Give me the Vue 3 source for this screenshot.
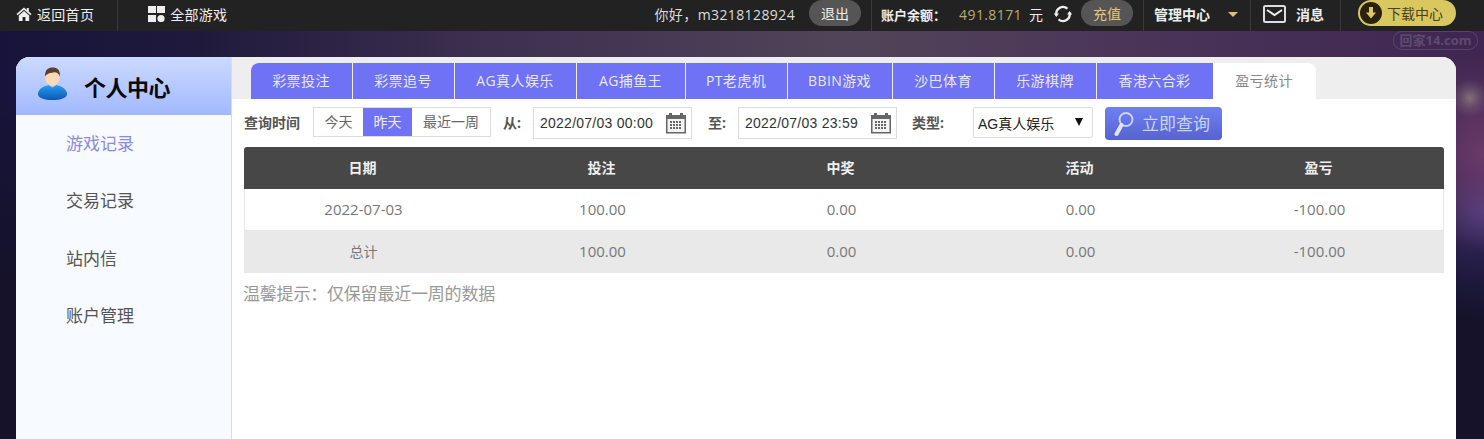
<template>
  <div class="page">
    <header class="topbar">
      <a class="top-link home">
        <svg width="16" height="14" viewBox="0 0 16 14"><path d="M8 0.5 L0.5 7 L1.6 8.2 L8 2.8 L14.4 8.2 L15.5 7 L12.8 4.6 V1 H10.8 V2.9 Z M8 4 L2.8 8.4 V14 H6.6 V10 H9.4 V14 H13.2 V8.4 Z" fill="#eee"/></svg>
        <span>返回首页</span>
      </a>
      <i class="sep first"></i>
      <a class="top-link games">
        <svg width="17" height="16" viewBox="0 0 17 16"><rect x="0" y="0" width="8" height="7" fill="#eee"/><rect x="9" y="0" width="8" height="7" fill="#eee"/><rect x="0" y="9" width="8" height="7" fill="#eee"/><circle cx="13" cy="12.5" r="3.6" fill="#eee"/></svg>
        <span>全部游戏</span>
      </a>
      <div class="top-right">
        <span class="hello">你好，m3218128924</span>
        <span class="pill logout">退出</span>
        <i class="sep"></i>
        <span class="balance-label">账户余额：</span>
        <span class="balance">491.8171</span>
        <span class="yuan">元</span>
        <svg class="refresh" width="20" height="20" viewBox="0 0 20 20" fill="none"><path d="M3.5 11.5 A6.8 6.8 0 0 1 14.5 4.6" stroke="#eee" stroke-width="2.2"/><path d="M16.5 8.5 A6.8 6.8 0 0 1 5.5 15.4" stroke="#eee" stroke-width="2.2"/><path d="M0.8 9.5 L6 9.5 L3.4 13 Z M19.2 10.5 L14 10.5 L16.6 7 Z" fill="#eee"/></svg>
        <span class="pill charge">充值</span>
        <i class="sep"></i>
        <span class="manage">管理中心</span>
        <i class="caret"></i>
        <i class="sep"></i>
        <svg class="mail" width="23" height="18" viewBox="0 0 23 18" fill="none"><rect x="1" y="1" width="21" height="16" rx="1.5" stroke="#ddd" stroke-width="2"/><path d="M4 5 L11.5 10 L19 5" stroke="#eee" stroke-width="2"/></svg>
        <span class="msg">消息</span>
        <i class="sep"></i>
        <span class="download">
          <svg width="22" height="22" viewBox="0 0 22 22"><circle cx="11" cy="11" r="11" fill="#2a2110"/><path d="M9 5 H13 V10.5 H16 L11 16.5 L6 10.5 H9 Z" fill="#e0c95c"/></svg>
          <span>下载中心</span>
        </span>
      </div>
    </header>

    <div class="watermark">回家14.com</div>

    <div class="card">
      <aside class="side">
        <div class="side-head">
          <svg class="avatar" width="31" height="33" viewBox="0 0 32 34">
            <defs>
              <linearGradient id="shirt" x1="0" y1="0" x2="0" y2="1"><stop offset="0" stop-color="#2a9cf0"/><stop offset="1" stop-color="#0a58b8"/></linearGradient>
            </defs>
            <path d="M1 28 C1 22 8 19.500 12 18.500 L16 21 L20 18.500 C24 19.500 31 22 31 28 C31 32 24 34 16 34 C8 34 1 32 1 28 Z" fill="url(#shirt)"/>
            <ellipse cx="16" cy="10.500" rx="7.500" ry="9" fill="#fbd9b8"/>
            <path d="M8.500 10 C7.500 3 12 0.500 16 0.500 C20.500 0.500 24.500 3 23.500 10 C22.500 6.500 20.500 5.500 18 5.500 C14.500 6.500 10.500 6 8.500 10 Z" fill="#5a4030"/>
          </svg>
          <h1>个人中心</h1>
        </div>
        <nav class="side-nav">
          <a v-for="(item, i) in sideItems" :key="item" :class="{ on: i === 0 }">{{ item }}</a>
        </nav>
      </aside>

      <main class="main">
        <div class="tabs">
          <a v-for="tab in tabs" :key="tab" class="tab" :class="{ active: tab === '盈亏统计' }">{{ tab }}</a>
        </div>

        <div class="content">
          <div class="filters">
            <span class="f-label">查询时间</span>
            <div class="range">
              <a v-for="r in ranges" :key="r" :class="{ on: r === '昨天' }">{{ r }}</a>
            </div>
            <span class="f-label from">从:</span>
            <div class="date">
              <span>2022/07/03 00:00</span>
              <svg width="22" height="22" viewBox="0 0 22 22"><path d="M1 3 H4 V1 H7 V3 H15 V1 H18 V3 H21 V21.500 H1 Z" fill="#666"/><rect x="2.500" y="7" width="17" height="13" fill="#f4f4f4"/><g fill="#666"><rect x="5" y="9" width="2" height="2"/><rect x="8" y="9" width="2" height="2"/><rect x="11" y="9" width="2" height="2"/><rect x="14" y="9" width="2" height="2"/><rect x="5" y="12" width="2" height="2"/><rect x="8" y="12" width="2" height="2"/><rect x="11" y="12" width="2" height="2"/><rect x="14" y="12" width="2" height="2"/><rect x="5" y="15" width="2" height="2"/><rect x="8" y="15" width="2" height="2"/><rect x="11" y="15" width="2" height="2"/><rect x="14" y="15" width="2" height="2"/></g></svg>
            </div>
            <span class="f-label to">至:</span>
            <div class="date">
              <span>2022/07/03 23:59</span>
              <svg width="22" height="22" viewBox="0 0 22 22"><path d="M1 3 H4 V1 H7 V3 H15 V1 H18 V3 H21 V21.500 H1 Z" fill="#666"/><rect x="2.500" y="7" width="17" height="13" fill="#f4f4f4"/><g fill="#666"><rect x="5" y="9" width="2" height="2"/><rect x="8" y="9" width="2" height="2"/><rect x="11" y="9" width="2" height="2"/><rect x="14" y="9" width="2" height="2"/><rect x="5" y="12" width="2" height="2"/><rect x="8" y="12" width="2" height="2"/><rect x="11" y="12" width="2" height="2"/><rect x="14" y="12" width="2" height="2"/><rect x="5" y="15" width="2" height="2"/><rect x="8" y="15" width="2" height="2"/><rect x="11" y="15" width="2" height="2"/><rect x="14" y="15" width="2" height="2"/></g></svg>
            </div>
            <span class="f-label type">类型:</span>
            <div class="select">
              <span>AG真人娱乐</span>
              <i></i>
            </div>
            <a class="query">
              <svg width="20" height="26" viewBox="0 0 20 26" fill="none"><circle cx="12" cy="8.500" r="6.500" stroke="#c9d3fb" stroke-width="2"/><path d="M7.500 14 L2.500 23" stroke="#dfe6ff" stroke-width="4" stroke-linecap="round"/></svg>
              <span class="query-text">立即查询</span>
            </a>
          </div>

          <div class="table">
            <div class="row head">
              <span v-for="c in columns" :key="c">{{ c }}</span>
            </div>
            <div class="row">
              <span v-for="(c, i) in dayRow" :key="i">{{ c }}</span>
            </div>
            <div class="row total">
              <span v-for="(c, i) in totalRow" :key="i" :class="{ cn: i === 0 }">{{ c }}</span>
            </div>
          </div>

          <p class="tip">温馨提示：仅保留最近一周的数据</p>
        </div>
      </main>
    </div>
  </div>
</template>

<script setup>
const sideItems = ['游戏记录', '交易记录', '站内信', '账户管理']
const tabs = ['彩票投注', '彩票追号', 'AG真人娱乐', 'AG捕鱼王', 'PT老虎机', 'BBIN游戏', '沙巴体育', '乐游棋牌', '香港六合彩', '盈亏统计']
const ranges = ['今天', '昨天', '最近一周']
const columns = ['日期', '投注', '中奖', '活动', '盈亏']
const dayRow = ['2022-07-03', '100.00', '0.00', '0.00', '-100.00']
const totalRow = ['总计', '100.00', '0.00', '0.00', '-100.00']
</script>

<style>
html, body {
  margin: 0;
  overflow: hidden;
}
</style>

<style scoped>
.page {
  position: relative;
  height: 439px;
  overflow: hidden;
  font-family: "Open Sans", "Noto Sans CJK SC", sans-serif;
  background:
    radial-gradient(circle at 1470px 98px, rgba(135, 125, 125, 0.85) 0, rgba(120, 100, 120, 0.5) 9px, rgba(90, 50, 110, 0) 19px),
    radial-gradient(ellipse 90px 100px at 1484px 155px, rgba(125, 65, 110, 0.75) 0, rgba(90, 50, 110, 0) 100%),
    radial-gradient(circle at 1484px 210px, rgba(80, 70, 150, 0.8) 0, rgba(60, 50, 120, 0.4) 40px, rgba(40, 30, 80, 0) 110px),
    linear-gradient(#0000 0, #0000 100px, #15122a 280px),
    linear-gradient(90deg, #17133a 0, #1f1a3c 200px, #3d2f50 480px, #524458 850px, #4a3458 1150px, #3f2652 1484px);
}

.topbar {
  display: flex;
  align-items: center;
  height: 31px;
  box-sizing: border-box;
  padding: 0 0 3px 16px;
  background: #222;
  color: #eee;
  font-size: 14px;
}

.top-link {
  display: flex;
  align-items: center;
  gap: 5px;
  letter-spacing: 0.3px;
}

.sep {
  align-self: flex-start;
  width: 1px;
  height: 31px;
  background: #3a3a3a;
}

.sep.first {
  margin: 0 30px 0 23px;
}

.top-right {
  display: flex;
  align-items: center;
  margin-left: auto;
  padding-right: 28px;
  height: 100%;
}

.hello {
  letter-spacing: 0.4px;
  color: #ddd;
}

.pill {
  display: flex;
  align-items: center;
  justify-content: center;
  width: 52px;
  height: 26px;
  border-radius: 13px;
  background: #555;
  margin-top: -2px;
}

.logout {
  margin: -2px 10px 0 14px;
}

.balance-label {
  margin-left: 9px;
  font-size: 13px;
  font-weight: 700;
}

.balance {
  margin-left: 13px;
  letter-spacing: 0.4px;
  color: #b9ad6a;
}

.yuan {
  margin-left: 7px;
}

.refresh {
  margin: 0 8px 0 10px;
}

.charge {
  color: #e6c878;
  margin-right: 10px;
}

.manage {
  margin-left: 10px;
  font-weight: 700;
}

.caret {
  width: 0;
  height: 0;
  margin: 0 12px 0 18px;
  border-left: 5px solid transparent;
  border-right: 5px solid transparent;
  border-top: 5px solid #e0c070;
}

.mail {
  margin-left: 12px;
}

.msg {
  margin: 0 16px 0 10px;
  font-weight: 700;
}

.download {
  display: flex;
  align-items: center;
  gap: 5px;
  width: 98px;
  height: 26px;
  margin: -2px 0 0 17px;
  padding-left: 2px;
  box-sizing: border-box;
  border-radius: 13px;
  background: #d9c860;
  color: #4a4020;
}

.watermark {
  position: absolute;
  top: 31px;
  left: 1393px;
  width: 85px;
  box-sizing: border-box;
  text-align: center;
  border: 1px solid rgba(255, 255, 255, 0.13);
  border-radius: 9px;
  font-size: 13px;
  font-weight: 700;
  line-height: 17px;
  color: rgba(255, 255, 255, 0.18);
}

.card {
  display: flex;
  width: 1440px;
  height: 382px;
  margin: 26px 0 0 16px;
  border-radius: 14px 14px 0 0;
  overflow: hidden;
  background: #fff;
}

.side {
  width: 215px;
  flex: none;
  background: #f7faff;
  border-right: 1px solid #d8dce4;
}

.side-head {
  display: flex;
  align-items: center;
  height: 58px;
  padding-left: 21px;
  background: linear-gradient(#cbdaff, #a2b8fe);
}

.avatar {
  margin-top: -5px;
}

.side-head h1 {
  margin: 0 0 0 16px;
  font-size: 22px;
  font-weight: 700;
  letter-spacing: -0.5px;
  color: #0a0a0a;
}

.side-nav {
  display: flex;
  flex-direction: column;
}

.side-nav a {
  height: 57.4px;
  padding-left: 50px;
  line-height: 58px;
  font-size: 17px;
  color: #555;
}

.side-nav a.on {
  color: #8a8ae2;
}

.main {
  flex: 1;
  min-width: 0;
}

.tabs {
  display: grid;
  grid-template-columns: 101px 101px 121px 108px 101px 104px 101px 101px 116px 102px;
  column-gap: 1px;
  height: 36px;
  padding: 6px 0 0 19px;
  background: #eee;
}

.tab {
  padding-right: 1px;
  background: #6f72f5;
  color: #e8e8ff;
  font-size: 14px;
  letter-spacing: 0.4px;
  line-height: 35px;
  text-align: center;
}

.tab:first-child {
  border-top-left-radius: 8px;
}

.tab.active {
  margin-left: -1px;
  background: #fff;
  color: #888;
  border-top-right-radius: 8px;
}

.content {
  padding: 8px 12px 0;
}

.filters {
  display: flex;
  align-items: flex-start;
  height: 40px;
}

.f-label {
  font-size: 14px;
  font-weight: 700;
  line-height: 32px;
  color: #555;
}

.range {
  display: grid;
  grid-template-columns: 49px 49px 78px;
  margin-left: 13px;
  height: 30px;
  box-sizing: border-box;
  border: 1px solid #ddd;
  background: #fff;
  font-size: 14px;
  line-height: 27px;
  text-align: center;
  color: #666;
}

.range a.on {
  background: #6f72f5;
  color: #eee;
}

.from {
  margin: 0 12px;
}

.to {
  margin: 0 12px 0 16px;
}

.type {
  margin: 0 29px 0 15px;
}

.date {
  display: flex;
  align-items: center;
  justify-content: space-between;
  width: 159px;
  height: 32px;
  box-sizing: border-box;
  padding: 0 4px 0 6px;
  border: 1px solid #ddd;
  font-family: "Liberation Sans", sans-serif;
  font-size: 14px;
  letter-spacing: 0.25px;
  color: #333;
}

.select {
  display: flex;
  align-items: center;
  justify-content: space-between;
  width: 120px;
  height: 31px;
  box-sizing: border-box;
  padding: 0 9px 0 4px;
  border: 1px solid #ddd;
  border-radius: 2px;
  font-family: "Liberation Sans", "Noto Sans CJK SC", sans-serif;
  font-size: 14px;
  color: #222;
}

.select i {
  width: 0;
  height: 0;
  margin-top: -2px;
  border-left: 4.5px solid transparent;
  border-right: 4.5px solid transparent;
  border-top: 8px solid #111;
}

.query {
  display: flex;
  align-items: center;
  gap: 8px;
  width: 117px;
  height: 33px;
  box-sizing: border-box;
  margin-left: 12px;
  padding-left: 9px;
  border-radius: 4px;
  background: linear-gradient(#6f80f4, #5663cf);
  color: #c9d3fb;
  font-size: 17px;
}

.query-text {
  margin-top: -2px;
}

.table {
  width: 1200px;
  font-size: 15px;
  color: #777;
  border-radius: 3px 3px 0 0;
  overflow: hidden;
}

.row {
  display: grid;
  grid-template-columns: repeat(5, 239px);
  height: 42px;
  box-sizing: border-box;
  align-items: center;
  text-align: center;
  padding-bottom: 1px;
  border: solid #e6e6e6;
  border-width: 0 1px 1px 0;
  box-shadow: inset 1px 0 0 #e6e6e6;
}

.row.head {
  padding-bottom: 3px;
  background: #474747;
  border: 0;
  box-shadow: none;
  color: #f0f0f0;
  font-size: 14px;
  font-weight: 700;
}

.row.head span {
  padding-right: 2px;
}

.row.total {
  padding-bottom: 2px;
  background: #e9e9e9;
  border: 0;
  box-shadow: none;
}

.row .cn {
  font-size: 14px;
}

.tip {
  margin: 9px 0 0 -1px;
  font-size: 17px;
  letter-spacing: -0.2px;
  line-height: 24px;
  color: #999;
}
</style>
